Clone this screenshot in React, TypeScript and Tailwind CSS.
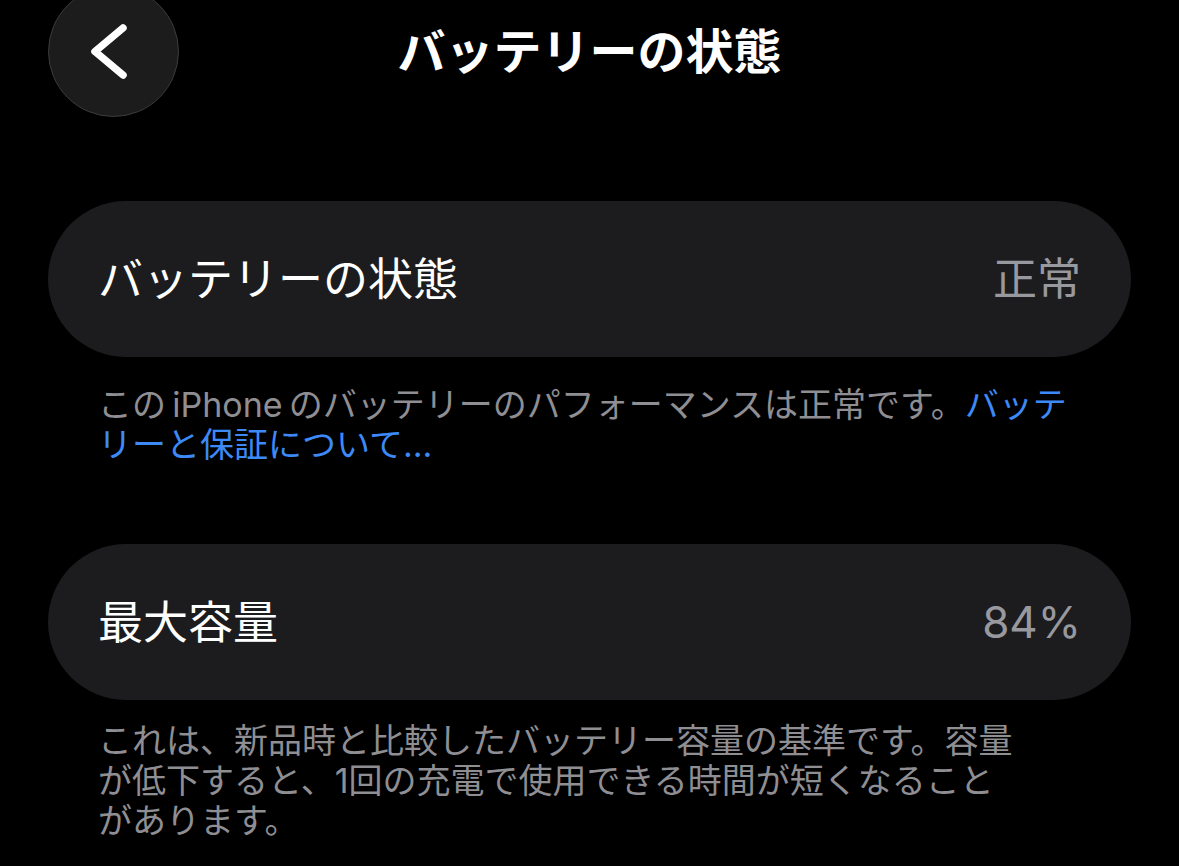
import React from "react";

const font = { fontFamily: '"Inter", "Noto Sans CJK JP", sans-serif' };

function Row({ label, value }: { label: string; value: string }) {
  return (
    <div className="mx-[48px] h-[156px] rounded-full bg-[#1c1c1e] px-[50px] flex items-center justify-between">
      <span className="text-[45px] leading-none text-white">{label}</span>
      <span className="text-[44px] leading-none text-[#98989f]">{value}</span>
    </div>
  );
}

export default function App() {
  return (
    <div className="w-[1179px] h-[866px] bg-black overflow-hidden" style={font}>
      <div className="grid grid-cols-[1fr_auto_1fr] items-center h-[131px] -mt-[14px]">
        <div className="pl-[48px]">
          <div className="w-[131px] h-[131px] rounded-full bg-[#1c1c1c] border-[1.5px] border-[#3c3c3e]">
            <svg width="128" height="128" viewBox="0 0 128 128" fill="none">
              <path d="M74 41 L46 64.5 L74 88" stroke="white" strokeWidth="7.5" strokeLinecap="round" strokeLinejoin="round" />
            </svg>
          </div>
        </div>
        <h1 className="text-[48px] font-bold text-white leading-none tracking-[0px]">バッテリーの状態</h1>
        <div />
      </div>

      <div className="mt-[84px]">
        <Row label="バッテリーの状態" value="正常" />
      </div>
      <p className="mt-[28px] px-[98px] text-[34px] leading-[40px] text-[#8e8e93] whitespace-nowrap">
        この{"\u2009"}iPhone{"\u2009"}のバッテリーのパフォーマンスは正常です。<span className="text-[#3d8af7]">バッテ</span>
        <br />
        <span className="text-[#3d8af7]">リーと保証について...</span>
      </p>

      <div className="mt-[79px]">
        <Row label="最大容量" value="84%" />
      </div>
      <p className="mt-[21px] px-[98px] text-[34px] leading-[40px] text-[#8e8e93] whitespace-nowrap">
        これは、新品時と比較したバッテリー容量の基準です。容量
        <br />
        が低下すると、1回の充電で使用できる時間が短くなること
        <br />
        があります。
      </p>
    </div>
  );
}
